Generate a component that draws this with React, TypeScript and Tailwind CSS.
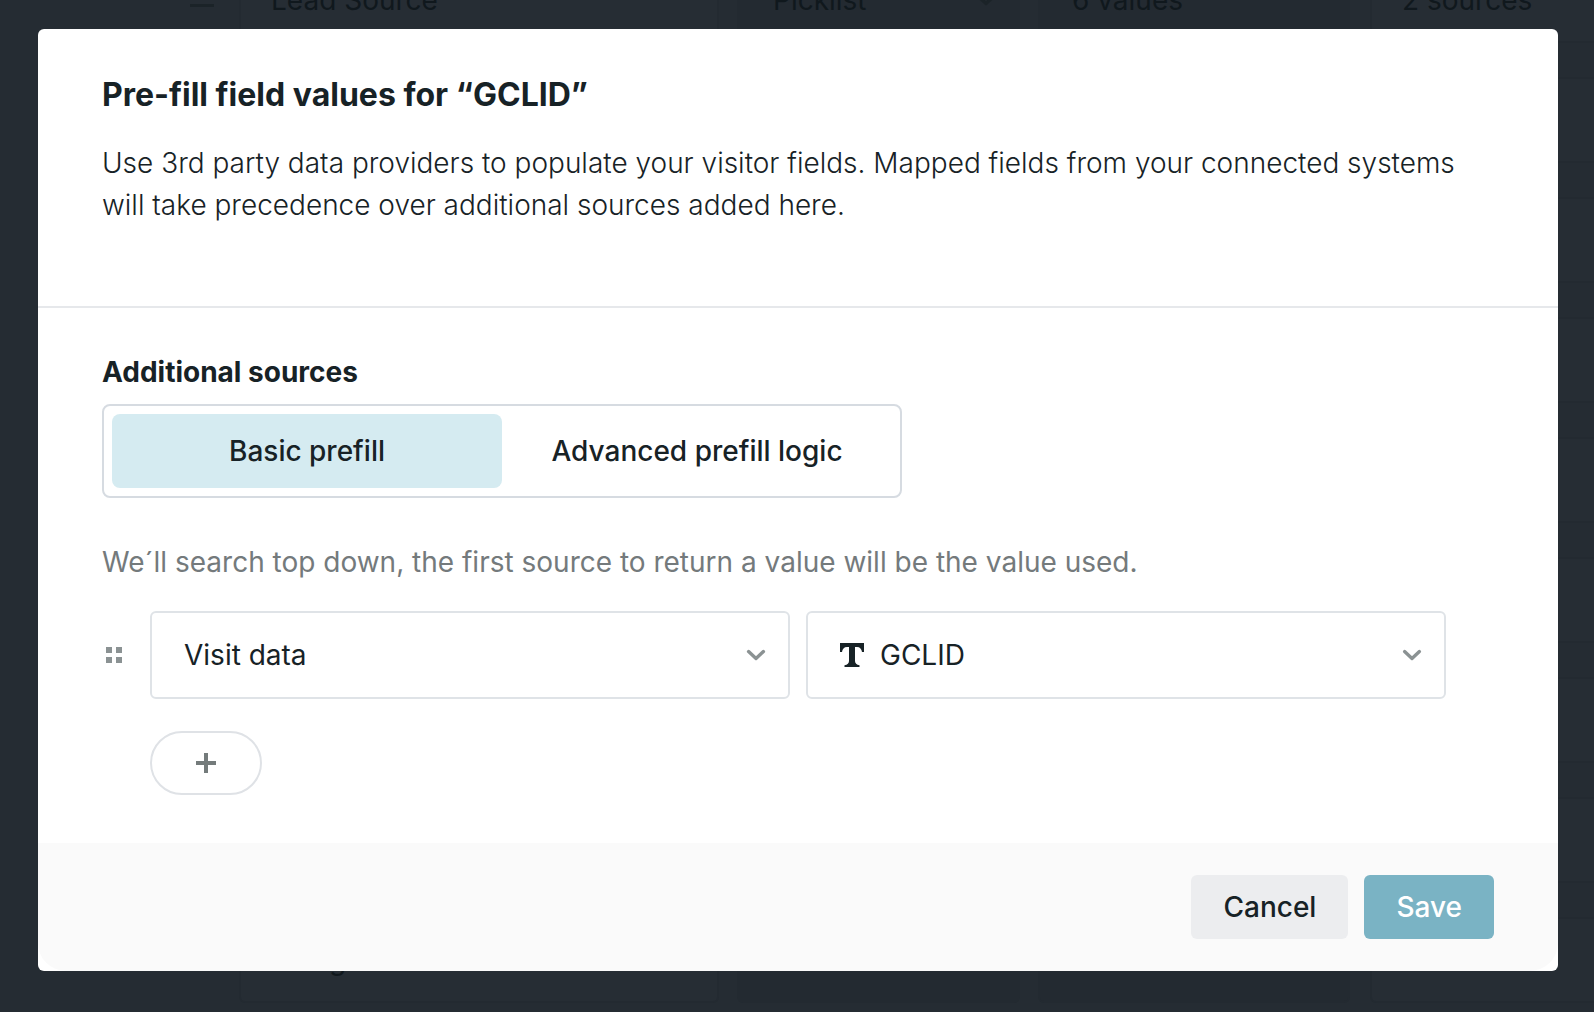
import React, { useState } from "react";

type Row = { name: string; type: string; values: string; sources: string };

const rows: Row[] = [
  { name: "Lead Source", type: "Picklist", values: "6 values", sources: "2 sources" },
  ...Array.from({ length: 7 }, () => ({ name: "", type: "", values: "", sources: "" })),
  { name: "Design", type: "", values: "", sources: "" },
];

function Chevron({ className }: { className: string }) {
  return (
    <svg className={className} width="20" height="12" viewBox="0 0 20 12" fill="none" aria-hidden="true">
      <path d="M2.600 2.600 L10 9.400 L17.400 2.600" stroke="currentColor" strokeWidth="3.400" strokeLinecap="round" strokeLinejoin="round" />
    </svg>
  );
}

function TextTypeIcon({ className }: { className: string }) {
  return (
    <svg className={className} width="24" height="24" viewBox="0 0 24 24" fill="currentColor" aria-hidden="true">
      <path d="M0 0H24V9H22C21.6 6 20 4 17 4H15V18C15 20.5 16.5 21.5 19.5 22.3V24H4.5V22.3C7.500 21.5 9 20.5 9 18V4H7C4 4 2.400 6 2 9H0Z" />
    </svg>
  );
}

function SourceSelect({ label, value, icon }: { label: string; value: string; icon?: boolean }) {
  return (
    <div className="grid items-center">
      <select
        aria-label={label}
        className={
          "col-start-1 row-start-1 h-22 w-full appearance-none rounded-md border-2 border-[#dfe3e7] bg-white pr-16 text-[28px] text-[#172226] " +
          (icon ? "pl-18" : "pl-8")
        }
      >
        <option>{value}</option>
      </select>
      {icon && <TextTypeIcon className="pointer-events-none col-start-1 row-start-1 ml-[34px] text-[#172226]" />}
      <Chevron className="pointer-events-none col-start-1 row-start-1 mr-6 justify-self-end text-[#8b9293]" />
    </div>
  );
}

function FieldTable() {
  return (
    <div aria-hidden="true" className="absolute inset-0 overflow-hidden bg-[#252c33] text-[28px] text-[#10181d]">
      <div className="-mt-[43px] flex w-[1800px] flex-col gap-[34px]">
        {rows.map((row, i) => (
          <div key={i} className="flex h-[86px] items-center">
            <div className="flex w-[239px] flex-col items-end gap-2 pr-[25px]">
              <span className="h-[3px] w-6 bg-[#1b2328]" />
              <span className="h-[3px] w-6 bg-[#1b2328]" />
            </div>
            <div className="mr-[18px] flex h-full w-[480px] items-center rounded-md border-2 border-[#232a31] bg-[#262d34] pl-[30px]">
              {row.name}
            </div>
            <div className="mr-[18px] flex h-full w-[283px] items-center justify-between rounded-md bg-[#232a31] pr-6 pl-9">
              {row.type}
              <Chevron className="text-[#1b2328]" />
            </div>
            <div className="mr-5 flex h-full w-[312px] items-center rounded-md border-2 border-[#232a31] bg-[#232a31] pl-8">
              {row.values}
            </div>
            <div className="flex h-full flex-1 items-center rounded-md border-2 border-[#232a31] bg-[#262d34] pl-[30px]">
              {row.sources}
            </div>
          </div>
        ))}
      </div>
    </div>
  );
}

export default function App() {
  const [tab, setTab] = useState("Basic prefill");
  return (
    <div className="relative min-h-screen bg-[#252c33] pt-[29px] pr-9 pb-10 pl-[38px] font-['Inter',sans-serif] text-[#172226]">
      <FieldTable />
      <main role="dialog" aria-labelledby="dialog-title" className="relative rounded-md bg-white">
        <header className="border-b-2 border-[#e6e8eb] px-16 pt-12 pb-20">
          <h1 id="dialog-title" className="text-[32px] leading-9 font-bold">
            Pre-fill field values for “GCLID”
          </h1>
          <p className="mt-[29px] text-[28px] leading-[42px] font-light">
            Use 3rd party data providers to populate your visitor fields. Mapped fields from your connected systems will
            take precedence over additional sources added here.
          </p>
        </header>

        <section className="px-16 pt-12 pb-12">
          <h2 className="text-[28px] leading-8 font-bold">Additional sources</h2>
          <div className="mt-4 grid w-[800px] max-w-full grid-cols-2 rounded-lg border-2 border-[#d6dbe1] p-2">
            {["Basic prefill", "Advanced prefill logic"].map((name) => (
              <button
                key={name}
                type="button"
                aria-pressed={tab === name}
                onClick={() => setTab(name)}
                className={"h-[74px] rounded-lg text-[28px] font-medium " + (tab === name ? "bg-[#d5ebf1]" : "bg-white")}
              >
                {name}
              </button>
            ))}
          </div>

          <p className="mt-12 text-[28px] leading-8 text-[#747a7c]">
            We´ll search top down, the first source to return a value will be the value used.
          </p>

          <div className="mt-[33px] flex items-center pr-12">
            <button type="button" aria-label="Reorder source" className="w-12 shrink-0 pl-1 text-[#8b9293]">
              <svg width="16" height="16" viewBox="0 0 16 16" fill="currentColor" aria-hidden="true">
                <path d="M0 0h6v6H0zM10 0h6v6h-6zM0 10h6v6H0zM10 10h6v6h-6z" />
              </svg>
            </button>
            <div className="grid flex-1 grid-cols-2 gap-4">
              <SourceSelect label="Source" value="Visit data" />
              <SourceSelect label="Source field" value="GCLID" icon />
            </div>
          </div>

          <button
            type="button"
            aria-label="Add source"
            className="mt-8 ml-12 flex h-16 w-28 items-center justify-center rounded-full border-2 border-[#dfe2e6] text-[#747b7b]"
          >
            <svg width="20" height="20" viewBox="0 0 20 20" fill="currentColor" aria-hidden="true">
              <path d="M8 0h4v8h8v4h-8v8H8v-8H0V8h8z" />
            </svg>
          </button>
        </section>

        <footer className="flex justify-end gap-4 rounded-b-[28px] bg-[#fafafa] px-16 py-8">
          <button type="button" className="h-16 rounded-md bg-[#ecedef] px-8 text-[28px] font-medium">
            Cancel
          </button>
          <button type="button" className="h-16 rounded-md bg-[#7ab3c4] px-8 text-[28px] font-medium text-white">
            Save
          </button>
        </footer>
      </main>
    </div>
  );
}
